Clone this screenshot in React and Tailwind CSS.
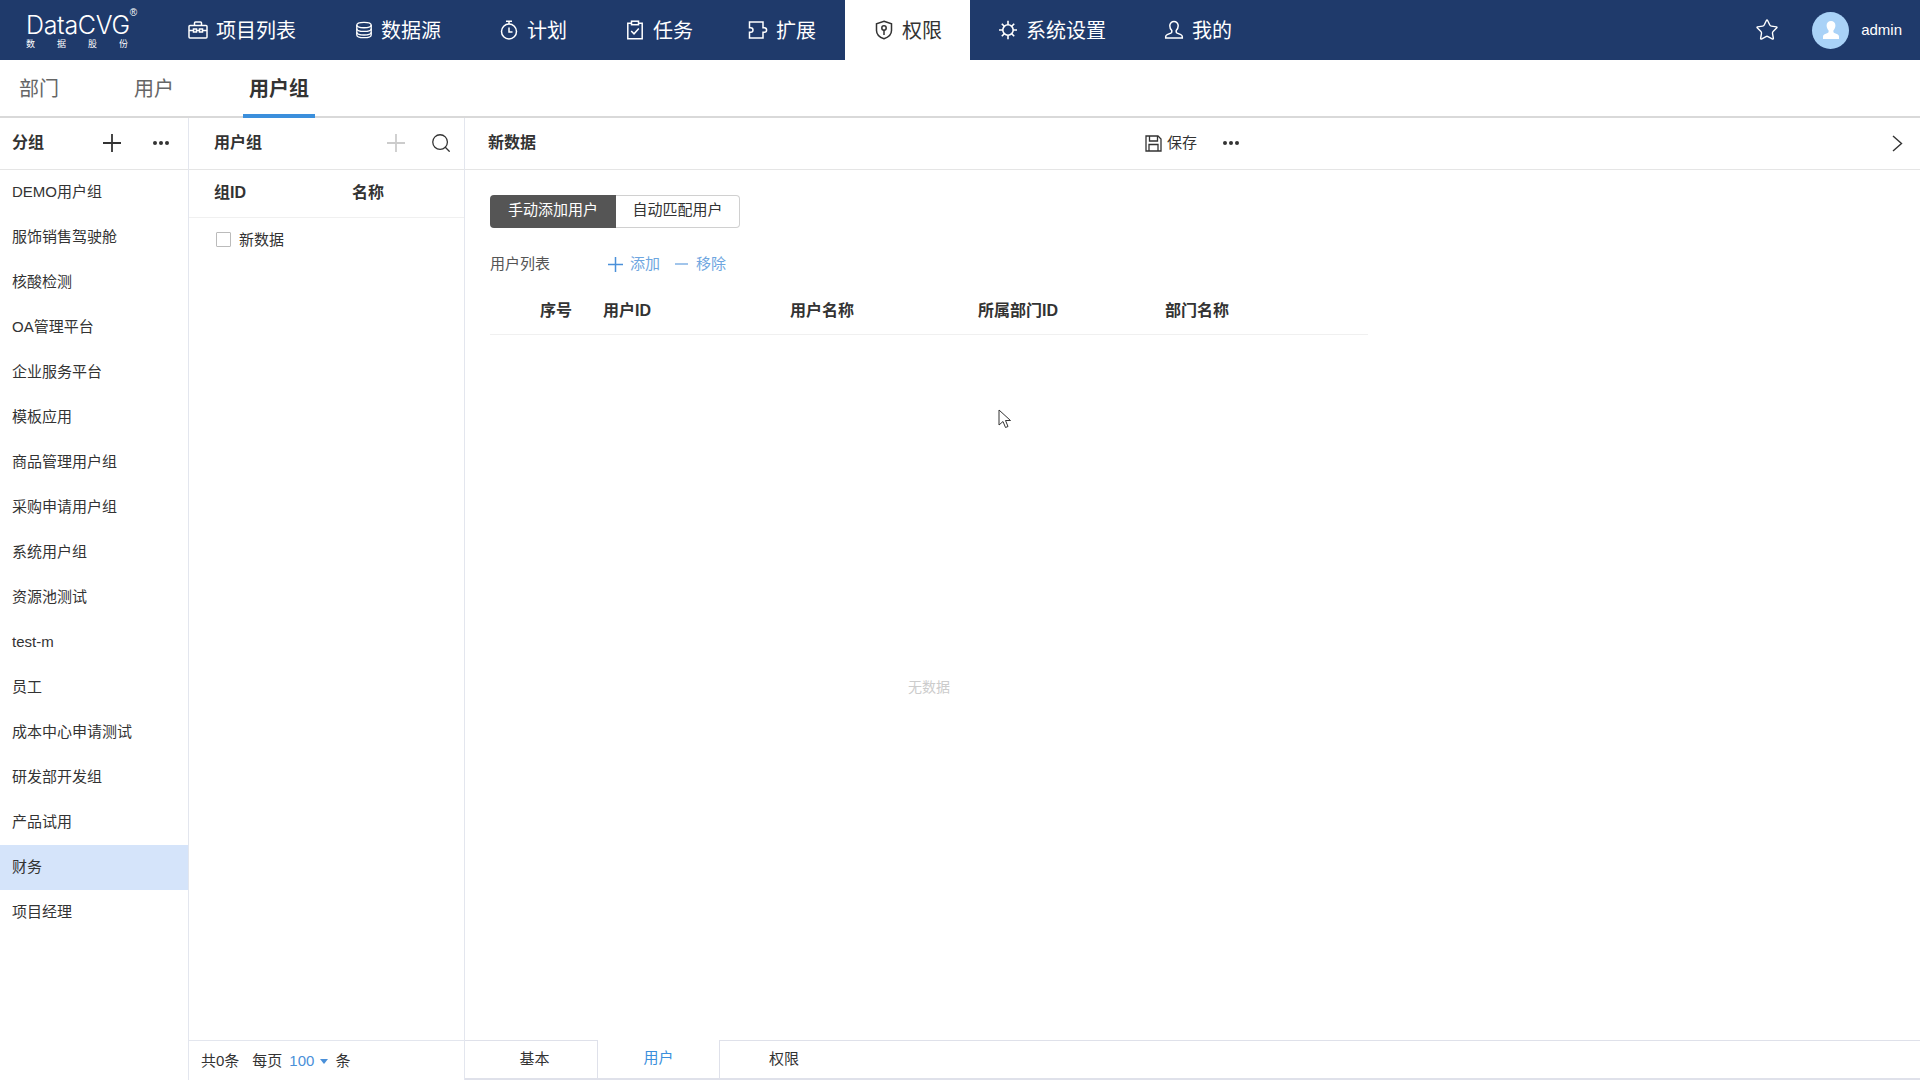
import { Star, Search } from "lucide-react";

const BriefcaseIcon = () => (
  <svg width="20" height="20" viewBox="0 0 20 20" fill="none" stroke="currentColor" strokeWidth="1.5">
    <rect x="1" y="5.5" width="18" height="12.5" rx="1" />
    <path d="M6.5 5.5V3a1 1 0 0 1 1-1h5a1 1 0 0 1 1 1v2.5" />
    <path d="M1 10.5h4.5M8.5 10.5h3M14.5 10.5H19" />
    <rect x="5.5" y="9" width="3" height="3" />
    <rect x="11.5" y="9" width="3" height="3" />
  </svg>
);

const DatabaseIcon = () => (
  <svg width="18" height="20" viewBox="0 0 20 20" fill="none" stroke="currentColor" strokeWidth="1.5">
    <ellipse cx="10" cy="4.5" rx="8" ry="3" />
    <path d="M2 4.5v11c0 1.7 3.6 3 8 3s8-1.3 8-3v-11" />
    <path d="M2 8.5c0 1.7 3.6 3 8 3s8-1.3 8-3M2 12.5c0 1.7 3.6 3 8 3s8-1.3 8-3" />
  </svg>
);

const TimerIcon = () => (
  <svg width="20" height="20" viewBox="0 0 20 20" fill="none" stroke="currentColor" strokeWidth="1.5">
    <circle cx="10" cy="11.5" r="7.5" />
    <path d="M7 1.2h6M10 1.2V4M10 7.5V12h3.5" />
  </svg>
);

const TaskIcon = () => (
  <svg width="20" height="20" viewBox="0 0 20 20" fill="none" stroke="currentColor" strokeWidth="1.5">
    <path d="M6.5 3.2H2.8v15.5h14.4V3.2h-3.7" />
    <rect x="6.5" y="1.2" width="7" height="3.5" />
    <path d="M6.2 11l2.8 2.8 4.8-5.3" />
  </svg>
);

const ExtendIcon = () => (
  <svg width="20" height="20" viewBox="0 0 20 20" fill="none" stroke="currentColor" strokeWidth="1.5">
    <path d="M1.5 2h13.5v5.7h1.3a2.3 2.3 0 0 1 0 4.6H15V18H1.5v-5.7h1.2a2.3 2.3 0 0 0 0-4.6H1.5z" />
  </svg>
);

const ShieldIcon = () => (
  <svg width="20" height="20" viewBox="0 0 20 20" fill="none" stroke="currentColor" strokeWidth="1.5">
    <path d="M10 1.2l7.5 2.5v6.8c0 4-3.2 6.8-7.5 8.2-4.3-1.4-7.5-4.2-7.5-8.2V3.7z" />
    <circle cx="10" cy="8" r="2.2" />
    <path d="M10 10.2V15" />
  </svg>
);

const GearIcon = () => (
  <svg width="20" height="20" viewBox="0 0 20 20" fill="none" stroke="currentColor" strokeWidth="1.6">
    <circle cx="10" cy="10" r="5.2" />
    <path d="M10 0.8v4M10 15.2v4M1 10h3.8M15.2 10H19M3.8 3.8l2.6 2.6M13.6 13.6l2.6 2.6M16.2 3.8l-2.6 2.6M6.4 13.6l-2.6 2.6" />
  </svg>
);

const UserIcon = () => (
  <svg width="20" height="20" viewBox="0 0 20 20" fill="none" stroke="currentColor" strokeWidth="1.5">
    <path d="M10 1.5a4.2 4.2 0 0 0-4.2 4.3c0 2 .9 3.6 2 4.7v1.3c0 .6-.4 1-1 1.3l-3.6 1.5c-.9.4-1.5 1.2-1.5 2.2v1.2h16.6v-1.2c0-1-.6-1.8-1.5-2.2l-3.6-1.5c-.6-.3-1-.7-1-1.3v-1.3c1.1-1.1 2-2.7 2-4.7A4.2 4.2 0 0 0 10 1.5z" />
  </svg>
);

const AvatarBust = () => (
  <svg width="20" height="20" viewBox="0 0 20 20" fill="white">
    <path d="M10 1a4.4 4.4 0 0 0-4.4 4.6c0 2.1.9 3.8 2 4.9v1.2c0 .7-.4 1.1-1 1.4l-3 1.2c-1.1.5-1.6 1.4-1.6 2.5V19h16v-2.2c0-1.1-.5-2-1.6-2.5l-3-1.2c-.6-.3-1-.7-1-1.4v-1.2c1.1-1.1 2-2.8 2-4.9A4.4 4.4 0 0 0 10 1z" />
  </svg>
);

const navItems = [
  { label: "项目列表", Icon: BriefcaseIcon, width: "w-[167px]" },
  { label: "数据源", Icon: DatabaseIcon, width: "w-[144px]" },
  { label: "计划", Icon: TimerIcon, width: "w-[126px]" },
  { label: "任务", Icon: TaskIcon, width: "w-[123px]" },
  { label: "扩展", Icon: ExtendIcon, width: "w-[97px]" },
];

const groups = [
  "DEMO用户组",
  "服饰销售驾驶舱",
  "核酸检测",
  "OA管理平台",
  "企业服务平台",
  "模板应用",
  "商品管理用户组",
  "采购申请用户组",
  "系统用户组",
  "资源池测试",
  "test-m",
  "员工",
  "成本中心申请测试",
  "研发部开发组",
  "产品试用",
  "财务",
  "项目经理",
];

const Dots = () => (
  <div className="flex items-center gap-[2px]">
    <span className="w-1 h-1 rounded-full bg-[#333]" />
    <span className="w-1 h-1 rounded-full bg-[#333]" />
    <span className="w-1 h-1 rounded-full bg-[#333]" />
  </div>
);

const PlusMark = ({ className }) => (
  <svg width="18" height="18" viewBox="0 0 18 18" stroke="currentColor" strokeWidth="1.8" className={className}>
    <path d="M9 0v18M0 9h18" />
  </svg>
);

const Header = () => (
  <header className="h-[60px] bg-[#1f3a6b] flex items-center text-white">
    <div className="w-[188px] pl-[26px] shrink-0">
      <div className="flex items-start">
        <span className="text-[25px] leading-[26px] font-light tracking-[-0.3px] font-['Inter',sans-serif]">DataCVG</span>
        <span className="text-[10px] leading-[10px] -mt-[4px]">®</span>
      </div>
      <div className="flex justify-between w-[102px] text-[9px] leading-[10px] mt-[1px]">
        <span>数</span>
        <span>据</span>
        <span>股</span>
        <span>份</span>
      </div>
    </div>
    {navItems.map(({ label, Icon, width }) => (
      <div key={label} className={`${width} flex items-center gap-2 text-[20px]`}>
        <Icon />
        <span className="mt-[2px]">{label}</span>
      </div>
    ))}
    <div className="w-[125px] h-[60px] bg-white text-[#333] flex items-center pl-[29px] gap-2 text-[20px]">
      <ShieldIcon />
      <span className="mt-[2px]">权限</span>
    </div>
    <div className="w-[194px] pl-[28px] flex items-center gap-2 text-[20px]">
      <GearIcon />
      <span className="mt-[2px]">系统设置</span>
    </div>
    <div className="flex items-center gap-2 text-[20px]">
      <UserIcon />
      <span className="mt-[2px]">我的</span>
    </div>
    <div className="ml-auto flex items-center pr-[18px]">
      <Star size={24} strokeWidth={1.4} />
      <div className="w-[37px] h-[37px] ml-[33px] rounded-full bg-[#a9d2f7] flex items-center justify-center">
        <AvatarBust />
      </div>
      <span className="ml-3 text-[15px]">admin</span>
    </div>
  </header>
);

const SubTabs = () => (
  <div className="h-[58px] border-b-2 border-[#d9d9d9] flex text-[20px] text-[#666]">
    <div className="w-[134px] pl-[19px] leading-[58px]">部门</div>
    <div className="w-[109px] leading-[58px]">用户</div>
    <div className="w-[72px] h-[58px] border-b-4 border-[#3b8fdc] text-center font-bold text-[#333] leading-[58px]">用户组</div>
  </div>
);

const GroupSidebar = () => (
  <aside className="w-[189px] shrink-0 border-r border-[#e3e6ee] flex flex-col">
    <div className="h-[52px] shrink-0 border-b border-[#e5e5e5] flex items-center pb-[1px] pl-[12px] pr-[19px]">
      <span className="text-[16px] font-bold">分组</span>
      <PlusMark className="ml-auto" />
      <div className="ml-[32px]"><Dots /></div>
    </div>
    <ul>
      {groups.map((g) => (
        <li
          key={g}
          className={`h-[45px] pl-[12px] leading-[43px] text-[15px] ${g === "财务" ? "bg-[#d5e4fa]" : ""}`}
        >
          {g}
        </li>
      ))}
    </ul>
  </aside>
);

const UserGroupPanel = () => (
  <section className="w-[276px] shrink-0 border-r border-[#e3e6ee] flex flex-col">
    <div className="h-[52px] shrink-0 border-b border-[#e5e5e5] flex items-center pb-[1px] pl-[25px] pr-[12px]">
      <span className="text-[16px] font-bold">用户组</span>
      <PlusMark className="ml-auto text-[#ccc]" />
      <Search size={22} strokeWidth={1.4} className="ml-[25px]" />
    </div>
    <div className="h-[48px] shrink-0 border-b border-[#f0f0f0] flex items-center pb-[2px] pl-[25px] text-[16px] font-bold">
      <span className="w-[138px]">组ID</span>
      <span>名称</span>
    </div>
    <div className="flex items-center pl-[27px] mt-[14px] gap-2 text-[15px] leading-[15px]">
      <span className="w-[15px] h-[15px] border border-[#bbb] rounded-[1px]" />
      <span>新数据</span>
    </div>
    <div className="mt-auto h-[40px] border-t border-[#e3e6ee] flex items-center pt-[2px] pl-[12px] text-[15px]">
      <span>共0条</span>
      <span className="ml-[13px]">每页</span>
      <span className="ml-[7px] text-[#4a90d9]">100</span>
      <span className="ml-[6px] border-x-[4px] border-x-transparent border-t-[5px] border-t-[#4a90d9]" />
      <span className="ml-[7px]">条</span>
    </div>
  </section>
);

const DetailPanel = () => (
  <section className="flex-1 flex flex-col relative">
    <div className="h-[52px] shrink-0 border-b border-[#e5e5e5] flex items-center pb-[1px] pl-[23px] pr-[17px]">
      <span className="text-[16px] font-bold">新数据</span>
      <div className="ml-[609px] flex items-center gap-[5px] text-[15px]">
        <svg width="17" height="17" viewBox="0 0 17 17" fill="none" stroke="currentColor" strokeWidth="1.3">
          <path d="M1 1h12l3 3v12H1z" />
          <path d="M4.5 1v5h8V1" />
          <path d="M4 16v-6.5h9V16" />
        </svg>
        <span>保存</span>
      </div>
      <div className="ml-[26px]"><Dots /></div>
      <svg width="11" height="17" viewBox="0 0 11 17" fill="none" stroke="currentColor" strokeWidth="1.4" className="ml-auto">
        <path d="M1 1l8.5 7.5L1 16" />
      </svg>
    </div>
    <div className="flex-1 pl-[25px] pt-[25px] flex flex-col">
      <div className="flex h-[33px] w-[250px] text-[15px]">
        <div className="w-[126px] bg-[#555] text-white rounded-l-[4px] flex items-center justify-center pb-[2px]">手动添加用户</div>
        <div className="w-[124px] border border-l-0 border-[#d0d0d0] rounded-r-[4px] flex items-center justify-center pb-[2px]">自动匹配用户</div>
      </div>
      <div className="flex items-center mt-[16px] h-[40px] text-[15px]">
        <span className="w-[118px] text-[#555]">用户列表</span>
        <PlusMark className="w-[15px] h-[15px] text-[#4a90d9]" />
        <span className="ml-[7px] text-[#6ea6e0]">添加</span>
        <svg width="13" height="2" viewBox="0 0 13 2" stroke="#6ea6e0" strokeWidth="1.3" className="ml-[15px]">
          <path d="M0 1h13" />
        </svg>
        <span className="ml-[8px] text-[#6ea6e0]">移除</span>
      </div>
      <div className="w-[878px] h-[49px] mt-[2px] pt-[2px] border-b border-[#f0f0f0] grid grid-cols-[113px_187px_188px_187px_1fr] items-center text-[16px] font-bold">
        <span className="pl-[50px]">序号</span>
        <span>用户ID</span>
        <span>用户名称</span>
        <span>所属部门ID</span>
        <span>部门名称</span>
      </div>
      <div className="w-[878px] flex-1 flex items-center justify-center text-[14px] text-[#ccc]">无数据</div>
    </div>
    <div className="h-[40px] shrink-0 border-t border-b-2 border-[#dfe1ea] flex text-[15px] leading-[35px] text-center">
      <div className="w-[132px] pl-[7px]">基本</div>
      <div className="w-[123px] -mt-px h-[38px] bg-white border-x border-[#dfe1ea] text-[#3b8fdc]">用户</div>
      <div className="w-[128px]">权限</div>
    </div>
    <svg className="absolute left-[533px] top-[291px]" width="14" height="20" viewBox="0 0 14 20">
      <path d="M1 1v15l4-3.5 2.5 6 2.5-1-2.5-6h5z" fill="white" stroke="#333" strokeWidth="1" />
    </svg>
  </section>
);

export default function App() {
  return (
    <div className="w-[1920px] h-[1080px] bg-white overflow-hidden flex flex-col text-[#333] font-['Liberation_Sans','Noto_Sans_CJK_SC',sans-serif]">
      <Header />
      <SubTabs />
      <div className="flex-1 flex min-h-0">
        <GroupSidebar />
        <UserGroupPanel />
        <DetailPanel />
      </div>
    </div>
  );
}
